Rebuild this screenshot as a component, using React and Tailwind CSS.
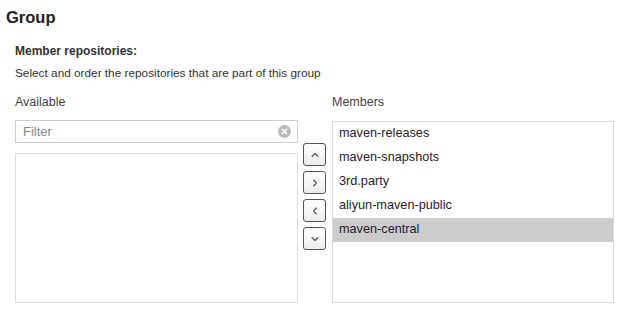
import React from "react";

const members = ["maven-releases", "maven-snapshots", "3rd.party", "aliyun-maven-public", "maven-central"];

const Caret = ({ d }) => (
  <svg width="8" height="8" viewBox="0 0 8 8" fill="none">
    <path d={d} stroke="#555" strokeWidth="1.1" strokeLinecap="round" strokeLinejoin="round" />
  </svg>
);

const carets = [
  "M1 5.5 L4 2.5 L7 5.5",
  "M2.5 1 L5.5 4 L2.5 7",
  "M5.5 1 L2.5 4 L5.5 7",
  "M1 2.5 L4 5.5 L7 2.5",
];

export default function App() {
  return (
    <div className="w-[622px] h-[313px] bg-white text-[#333] font-['Liberation_Sans',Arial,sans-serif]">
      <div className="h-[34px] pl-[6px] pt-[6px] text-[16.5px] font-bold leading-[22px] text-[#222]">Group</div>
      <div className="pl-[15px]">
        <div className="mt-[10px] text-[12px] font-bold leading-[14px]">Member repositories:</div>
        <div className="mt-[9px] text-[11.8px] leading-[13px]">Select and order the repositories that are part of this group</div>
        <div className="flex mt-[15px]">
          <div className="w-[283px] flex flex-col">
            <div className="text-[12.5px] leading-[14px] text-[#444]">Available</div>
            <div className="mt-[11px] h-[23px] border border-[#cfcfcf] flex items-center pl-[7px] pr-[6px]">
              <span className="flex-1 text-[13px] text-[#888]">Filter</span>
              <span className="w-[13px] h-[13px] rounded-full bg-[#bbb] flex items-center justify-center">
                <svg width="7" height="7" viewBox="0 0 7 7">
                  <path d="M1.5 1.5 L5.5 5.5 M5.5 1.5 L1.5 5.5" stroke="white" strokeWidth="1.7" strokeLinecap="round" />
                </svg>
              </span>
            </div>
            <div className="mt-[10px] h-[150px] border border-[#dcdcdc]"></div>
          </div>
          <div className="ml-[5px] pt-[48px] flex flex-col gap-[5px]">
            {carets.map((d, i) => (
              <button key={i} className="w-[23px] h-[23px] rounded-[3px] border border-[#555] bg-gradient-to-b from-white to-[#ececec] flex items-center justify-center">
                <Caret d={d} />
              </button>
            ))}
          </div>
          <div className="ml-[6px] w-[282px] flex flex-col">
            <div className="text-[12.5px] leading-[14px] text-[#444]">Members</div>
            <div className="mt-[12px] h-[182px] border border-[#dcdcdc]">
              {members.map((m, i) => (
                <div key={m} className={"h-[24px] flex items-center pl-[6px] text-[12.7px] text-[#2a1a2e] " + (i === 4 ? "bg-[#cccccc]" : "")}>
                  {m}
                </div>
              ))}
            </div>
          </div>
        </div>
      </div>
    </div>
  );
}
